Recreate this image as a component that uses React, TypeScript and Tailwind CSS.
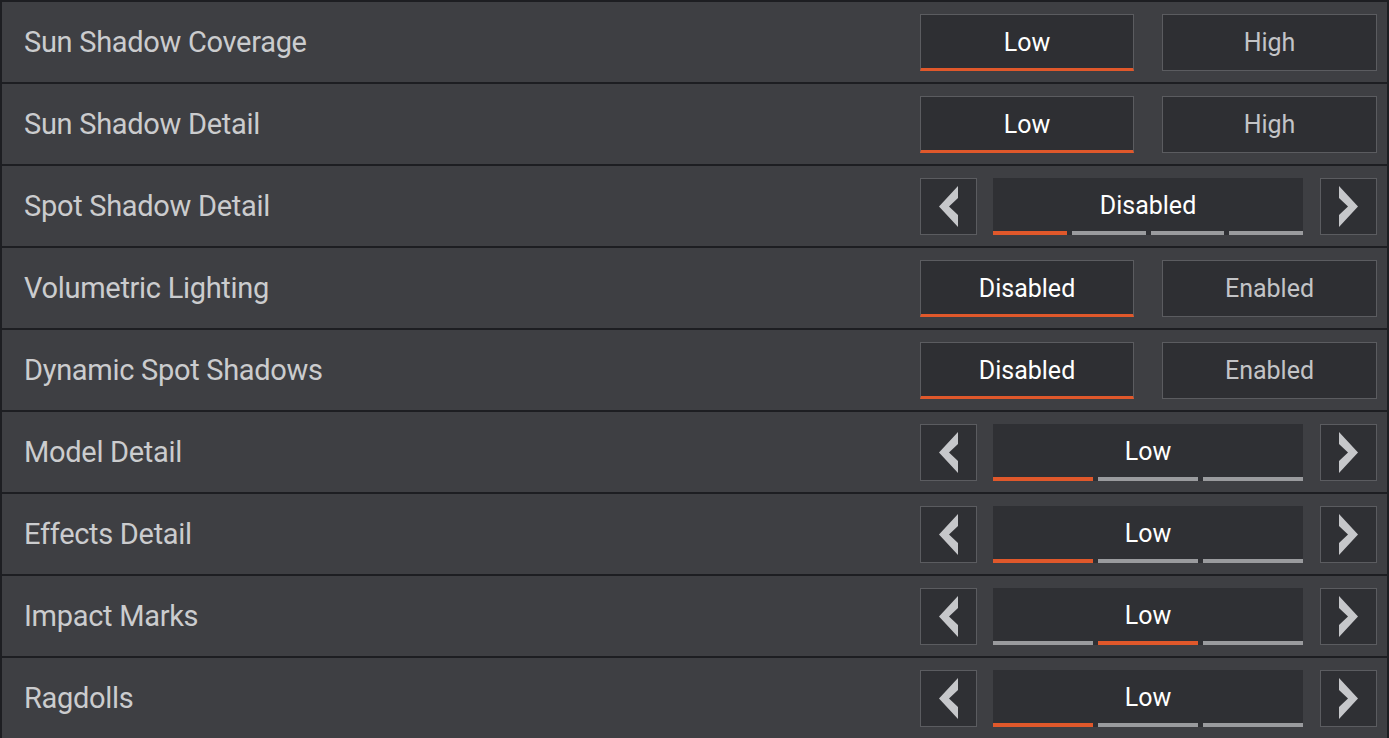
import React from 'react';

type Row =
  | { label: string; kind: 'toggle'; options: [string, string]; active: number }
  | { label: string; kind: 'select'; value: string; steps: number; active: number };

const rows: Row[] = [
  { label: 'Sun Shadow Coverage', kind: 'toggle', options: ['Low', 'High'], active: 0 },
  { label: 'Sun Shadow Detail', kind: 'toggle', options: ['Low', 'High'], active: 0 },
  { label: 'Spot Shadow Detail', kind: 'select', value: 'Disabled', steps: 4, active: 0 },
  { label: 'Volumetric Lighting', kind: 'toggle', options: ['Disabled', 'Enabled'], active: 0 },
  { label: 'Dynamic Spot Shadows', kind: 'toggle', options: ['Disabled', 'Enabled'], active: 0 },
  { label: 'Model Detail', kind: 'select', value: 'Low', steps: 3, active: 0 },
  { label: 'Effects Detail', kind: 'select', value: 'Low', steps: 3, active: 0 },
  { label: 'Impact Marks', kind: 'select', value: 'Low', steps: 3, active: 1 },
  { label: 'Ragdolls', kind: 'select', value: 'Low', steps: 3, active: 0 },
];

function Chevron({ dir }: { dir: 'left' | 'right' }) {
  return (
    <svg width="19" height="41" viewBox="0 0 19 41">
      <polygon
        points={dir === 'left' ? '19,0 19,12 10,20.5 19,29 19,41 0,20.5' : '0,0 0,12 9,20.5 0,29 0,41 19,20.5'}
        fill="#c6c7ca"
      />
    </svg>
  );
}

function ArrowBox({ dir }: { dir: 'left' | 'right' }) {
  return (
    <div className="w-[57px] h-[57px] flex items-center justify-center bg-[#2f3034] border border-[#5b5c60]">
      <Chevron dir={dir} />
    </div>
  );
}

function Toggle({ options, active }: { options: [string, string]; active: number }) {
  return (
    <div className="flex gap-[28px]">
      {options.map((o, i) => (
        <div
          key={o}
          className={
            i === active
              ? 'w-[214px] h-[57px] flex items-center justify-center bg-[#2e2f33] border border-[#5b5c60] border-b-[3px] border-b-[#e0582b] text-white text-[25px] pt-[3px]'
              : 'w-[215px] h-[57px] flex items-center justify-center bg-[#2e2f33] border border-[#5b5c60] text-[#c3c4c7] text-[25px] pt-[1px]'
          }
        >
          {o}
        </div>
      ))}
    </div>
  );
}

function Select({ value, steps, active }: { value: string; steps: number; active: number }) {
  return (
    <div className="flex items-center">
      <ArrowBox dir="left" />
      <div className="w-[310px] h-[57px] ml-[16px] mr-[17px] bg-[#2f3034] flex flex-col">
        <div className="flex-1 flex items-center justify-center text-white text-[25px] pt-[4px]">{value}</div>
        <div className="flex gap-[5px]">
          {Array.from({ length: steps }).map((_, i) => (
            <div key={i} className={i === active ? 'flex-1 h-[4px] bg-[#e0582b]' : 'flex-1 h-[4px] bg-[#9a9b9e]'} />
          ))}
        </div>
      </div>
      <ArrowBox dir="right" />
    </div>
  );
}

export default function App() {
  return (
    <div
      className="w-[1389px] h-[738px] overflow-hidden bg-[#1d1e22] pt-[2px] px-[2px]"
      style={{ fontFamily: 'Roboto, "Liberation Sans", sans-serif' }}
    >
      {rows.map((r) => (
        <div key={r.label} className="h-[80px] mb-[2px] bg-[#3e3f43] flex items-center justify-between pl-[22px] pr-[10px]">
          <span className="text-[29px] text-[#cbccce] tracking-[-0.3px] pt-[2px]">{r.label}</span>
          {r.kind === 'toggle' ? (
            <Toggle options={r.options} active={r.active} />
          ) : (
            <Select value={r.value} steps={r.steps} active={r.active} />
          )}
        </div>
      ))}
    </div>
  );
}
